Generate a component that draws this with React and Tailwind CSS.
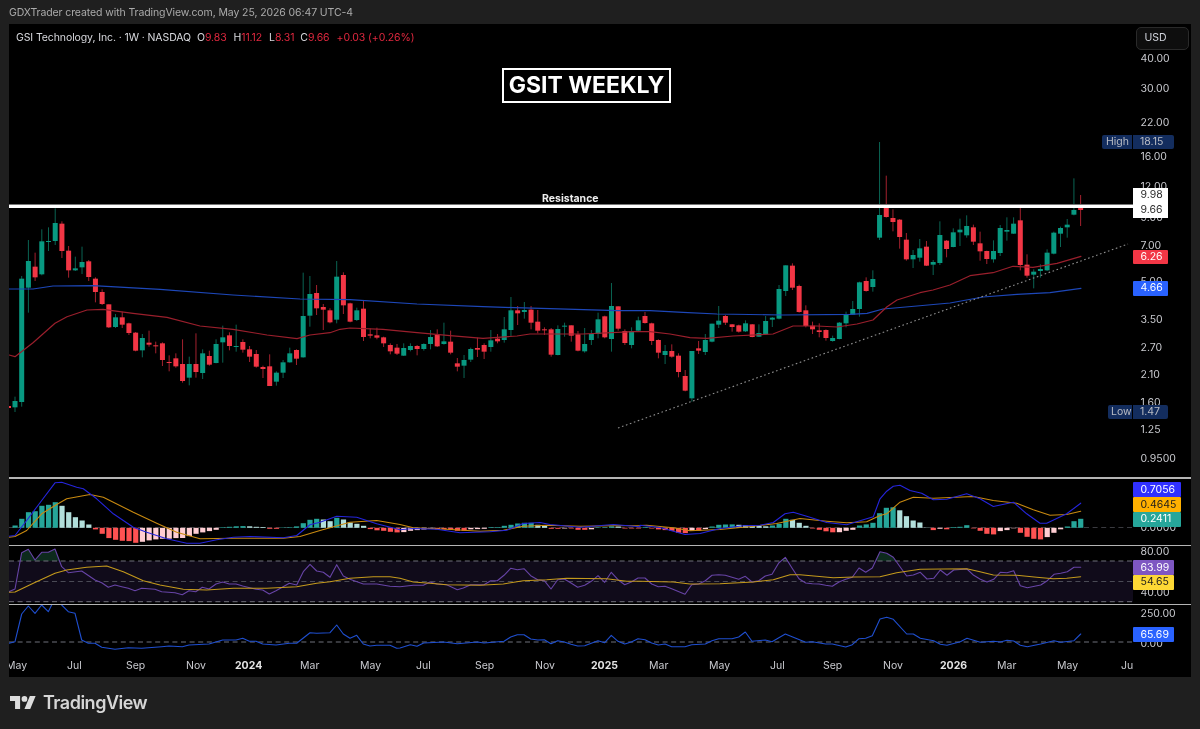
import React from 'react';

const X = (i) => 15 + 6.702 * i;
const Z = (ox, oy, a) => {
  const out = [];
  for (let i = 0; i < a.length; i += 2) out.push([ox + a[i] / 3, oy + a[i + 1] / 3]);
  return out;
};
const P = (pts) => pts.map((p) => p[0].toFixed(1) + ',' + p[1].toFixed(1)).join(' ');

const seg = (ox, oy, s) =>
  s.trim().split(/\s+/).map((r) => {
    const [c, a, b, d, e] = r.split(',');
    return { g: c === 'g', bt: oy + a / 3, bb: oy + b / 3, wt: oy + d / 3, wb: oy + e / 3 };
  });

const candles = [
  ...seg(0, 200, `g,603,622,590,636 g,236,606,228,620 g,183,263,120,338 r,200,232,158,243 g,124,223,88,226 g,123,126,82,153 g,69,123,25,135 r,71,153,64,174 r,152,211,138,233 g,205,211,170,213 g,186,202,140,222 r,184,231,180,243 r,236,276,232,307 r,276,312,268,315 r,313,382,313,384 g,352,381,342,384 r,352,374,335,384 r,370,399,368,405 r,398,452,396,454 g,414,451,402,472 r,428,434,392,440 r,436,439,425,460 r,430,480,427,498 r,486,489,466,514 r,475,499,460,503 r,492,543,418,548 g,492,533,470,556 r,492,516,400,533 g,460,519,448,537 r,468,494,452,497 g,432,489,418,490 g,412,427,377,488 r,406,438,397,451 g,438,441,374,455 r,426,449,418,458 r,448,470,438,486 r,462,500,450,503 r,501,507,497,534 r,499,558,463,558 g,518,545,514,557 g,487,518,480,534 g,460,487,443,488 r,450,476,448,495 g,348,472,218,473 g,282,347,228,380 r,279,325,255,345 r,321,329,312,390 r,331,367,325,370 g,230,359,183,370 r,225,316,217,342`),
  ...seg(350, 260, `r,130,185,128,187 g,151,180,143,183 r,146,231,120,243 r,223,227,205,235 r,226,233,203,238 r,232,250,230,261 r,255,274,250,283 r,263,281,252,285 g,264,287,250,288 g,258,270,250,274 r,258,267,255,286 g,252,267,250,272 g,231,252,210,268 r,225,259,208,261 g,244,252,188,254 r,245,278,212,283 r,310,320,294,334 g,300,317,285,354 g,267,299,263,306 r,264,269,233,291 r,255,275,250,297 g,241,261,210,275 r,236,244,222,250 g,208,240,171,248 g,151,210,111,230 r,151,160,138,195 g,150,156,126,176 r,149,188,138,208 r,185,212,150,220 r,208,211,202,225 r,208,284,204,290 g,207,285,196,286 g,197,200,188,230 r,196,227,196,245 r,223,272,213,274 g,252,274,204,278 g,222,240,210,255 g,178,222,158,235 r,169,232,167,235 g,138,237,69,275 r,139,206,139,212 r,213,249,208,255 g,213,255,202,265 g,181,212,170,215 r,168,189,156,191 r,190,243,188,255`),
  ...seg(650, 200, `r,420,458,418,475 g,453,465,435,492 r,453,470,433,473 r,467,516,460,532 r,528,572,510,574 g,453,595,453,605 r,445,452,423,462 g,420,456,402,465 g,371,425,371,427 g,362,374,318,384 r,348,368,345,375 r,373,381,372,395 r,376,395,374,398 g,370,394,361,396 r,373,411,372,412 g,399,410,373,411 g,363,403,348,405 g,353,359,351,381 g,267,356,255,358 g,196,273,196,288 r,197,263,190,270 r,258,336,254,338 r,331,378,316,382 r,377,388,365,402 r,391,396,370,412 r,390,414,388,422 g,414,423,407,425 g,368,417,366,418 g,344,370,335,382 g,327,344,303,345 g,247,327,245,350 r,243,273,232,275 g,237,261,211,275`),
  ...seg(860, 130, `g,255,323,36,330 r,229,261,137,263 r,264,276,238,304 r,269,321,267,356 r,329,388,309,392 g,375,388,360,414 g,355,383,327,395 r,350,407,333,408 g,396,404,390,435 g,315,399,274,405 r,332,357,330,382 g,307,351,295,352 g,299,307,266,348 g,288,316,256,323 r,292,335,284,345 r,340,364,305,392 r,363,387,362,402 g,363,388,331,398 g,294,369,285,378 g,300,305,262,332 g,281,311,262,312 r,271,405,228,421 r,404,437,373,443 g,425,434,418,475 g,417,423,403,443 g,368,421,358,423 g,308,371,305,373 g,294,311,290,351 g,284,292,267,323 g,240,254,145,256 r,234,240,195,288`),
];

const blueMA = [[9,289],[33,289],[53,286],[93,285.7],[160,289.3],[233,295],[300,299],[350,299.7],[417,304],[483,306.7],[550,308.7],[617,310.7],[650,310.7],[683,312.3],[717,314],[783,315],[850,314.3],[867,313.3],[883,309],[917,306],[950,303],[983,297],[1017,294.3],[1050,292.7],[1081,288.3]];
const redMA = [[9,355],[15,356.7],[33,342.7],[55,323.3],[67,316.7],[87,310],[103,309.3],[133,313.3],[167,317.3],[200,326],[233,329.3],[267,335],[297,338.7],[310,335],[330,332.7],[340,329.3],[350,328],[383,329.3],[417,332.7],[450,335.7],[483,338.3],[517,336],[530,334],[583,334],[633,331.7],[650,331.7],[670,334],[690,337.7],[707,338.3],[733,336],[773,334],[793,326],[817,326],[837,327],[857,324],[873,320],[887,306.7],[897,300],[920,292.7],[933,290],[950,285],[970,275.7],[993,272.7],[1013,266.3],[1033,267.3],[1057,263.3],[1081,256.3]];

const hist = [2.3,9,15.6,16.6,22,23,25.6,22,15.6,10.6,7.3,3.3,-1.6,-6,-10.3,-12,-13,-13.3,-15,-14,-12.6,-11.6,-11,-10.9,-10.3,-10.2,-8.3,-6,-4.6,-3.3,-2,.6,1,1.5,1.7,1.5,1,.8,-1,-1,.4,.6,1.4,4.6,8,9,8.3,6.6,10,8.3,5.3,4,2,-1.3,-2.5,-3,-4,-4.6,-4.3,-3,-2.3,-1.7,-1,-1.5,-1.5,-2,-3,-3,-1.5,-1.3,-1,.7,.7,2,3,4.3,5,5,3,2.5,-1,-1,-.7,-.7,-2,-2,-1.5,.5,.5,1.5,1.3,-.7,-.7,-.7,.7,-.7,-1.6,-2.3,-3,-5,-5.3,-3,-3,-1.3,1.3,3,3.3,3.4,3,2.6,2,1.9,1.5,2.3,4,9,8,5,2,-.7,-2,-3.5,-4.5,-4.4,-3,-2,2.3,3.4,5,14.6,20,20.5,17.5,11.6,7.3,5.3,.3,-2.3,-1,-1.5,.7,1,2.6,-.6,-3,-6,-6.6,-3.3,-2.3,-.5,-5,-9,-11,-11.6,-9.3,-5,-1.5,1.3,6.6,9];

const macd = [
  ...Z(0,470,[27,197,45,195,80,150,125,90,165,37,185,35,230,50,250,55,290,85,340,130,400,170,440,185,500,205,560,218,600,218,650,208,700,200,750,198,850,202,890,195,930,163,960,155,1010,137,1070,140,1130,160,1200,178]),
  ...Z(380,478,[100,150,170,152,240,163,330,160,380,155,430,135,480,132,510,138,600,146,700,138,780,145]),
  ...Z(620,478,[60,140,120,147,195,168,240,165,300,150,370,142,420,140,460,132,495,106,520,101,560,113,620,132,680,139,720,127,760,115]),
  ...Z(850,470,[90,85,110,62,130,47,150,44,180,60,215,68,250,88,290,86,350,70,390,85,430,108,490,95,530,130,570,158,590,158,650,130,692,98]),
];
const signal = [
  ...Z(0,470,[27,200,45,198,80,180,125,130,165,105,200,85,270,72,310,80,400,125,470,158,530,185,600,205,700,203,850,203,900,198,960,180,1050,155,1130,150,1200,162]),
  ...Z(380,478,[100,148,200,152,300,158,370,155,430,143,500,140,600,143,700,142,780,141]),
  ...Z(620,478,[80,140,160,148,210,157,300,153,400,143,470,135,540,120,620,128,680,133,740,130]),
  ...Z(850,470,[90,135,110,130,150,95,190,80,250,83,370,78,430,90,500,98,550,118,600,134,650,132,692,122]),
];
const rsi = [
  ...Z(0,470,[27,365,45,357,65,248,85,238,105,270,125,247,145,247,165,237,185,290,205,308,245,303,285,330,305,338,325,352,345,345,365,350,385,355,405,362,425,355,465,358,485,365,525,368,547,374,567,362,587,365,607,352,627,357,648,342,668,336,688,342,708,342,728,348,768,358,788,360,808,372,828,362,868,340,890,345,910,305,930,283,950,303,970,307,990,322,1010,284,1030,318,1050,328,1090,342,1130,342,1170,349,1200,350]),
  ...Z(380,478,[60,326,100,322,130,322,150,312,170,318,200,320,232,335,250,330,272,320,312,320,332,308,352,308,372,292,392,271,412,275,432,272,452,293,473,305,493,308,513,333,533,305,553,303,573,315,593,328,614,322,634,310,654,293,674,313,694,283,714,305,734,320,754,312,774,300]),
  ...Z(620,478,[75,300,95,318,115,326,135,325,155,332,195,349,215,320,236,318,256,308,276,292,296,290,316,292,336,298,356,304,376,295,396,312,416,308,436,294,456,289,476,255,496,238,516,270,537,302,557,315,577,317,597,318,617,322,637,325,657,312,677,304,697,298,717,270,737,283,757,270]),
  ...Z(850,470,[90,245,110,250,130,262,150,290,170,318,190,315,211,307,231,327,251,325,271,300,291,316,311,300,351,297,371,316,391,328,411,336,431,328,451,307,471,308,491,302,511,347,532,353,572,345,592,332,612,313,632,310,652,305,672,292,692,292]),
];
const rsiMa = [
  ...Z(0,470,[27,367,45,366,100,340,165,310,200,300,260,292,320,288,370,305,430,332,480,345,550,358,620,360,700,355,800,355,890,350,950,340,990,335,1050,325,1120,320,1170,320,1200,325]),
  ...Z(380,478,[100,312,150,316,200,320,300,322,370,318,430,308,500,305,560,301,680,302,740,310,780,310]),
  ...Z(620,478,[160,312,210,318,300,317,400,312,460,305,510,290,540,290,640,299,700,297]),
  ...Z(850,470,[90,320,140,308,210,298,350,296,390,305,430,315,500,316,560,322,610,326,650,325,692,320]),
];
const cci = [
  ...Z(0,470,[27,520,45,515,65,432,85,408,105,430,125,405,145,425,165,385,185,405,205,425,225,430,245,510,265,520,285,520,305,532,345,538,385,533,425,535,485,530,507,528,547,530,567,525,627,522,668,510,708,510,728,505,748,514,768,514,788,522,828,525,868,520,890,520,930,488,950,490,990,488,1010,465,1030,492,1050,505,1070,496,1090,522,1110,528,1130,526,1170,526,1190,535]),
  ...Z(380,478,[60,510,91,500,111,505,131,495,191,492,232,497,292,492,312,495,372,490,392,477,412,470,432,470,452,483,473,486,493,485,513,497,533,488,553,492,573,499,593,504,614,503,634,496,654,488,674,494,694,472,714,490,734,498,754,492,774,482]),
  ...Z(620,478,[75,485,95,495,115,501,135,498,155,506,195,506,215,500,256,498,276,488,296,482,336,482,356,477,376,462,396,490,436,486,456,491,496,468,557,493,577,491,617,498,637,498,677,507,697,500,717,482,737,481,757,473]),
  ...Z(850,470,[90,447,110,442,130,448,170,492,190,492,211,505,251,512,271,523,291,526,331,515,351,505,391,517,431,514,451,516,471,511,491,513,511,526,532,530,572,522,612,512,632,517,672,512,692,492]),
];

const priceTicks = [
  ['40.00','top-[27px]'],['30.00','top-[57px]'],['22.00','top-[91px]'],['16.00','top-[125px]'],['12.00','top-[155px]'],['9.00','top-[186px]'],['7.00','top-[214px]'],['5.00','top-[250px]'],['3.50','top-[288px]'],['2.70','top-[316px]'],['2.10','top-[343px]'],['1.60','top-[371px]'],['1.25','top-[398px]'],['0.9500','top-[427px]'],
];
const timeTicks = [
  ['May','left-[-3px]'],['Jul','left-[58px]'],['Sep','left-[117px]'],['Nov','left-[177px]'],['2024','left-[226px] font-bold text-[#e4e4e4]'],['Mar','left-[291px]'],['May','left-[351px]'],['Jul','left-[407px]'],['Sep','left-[466px]'],['Nov','left-[526px]'],['2025','left-[582px] font-bold text-[#e4e4e4]'],['Mar','left-[640px]'],['May','left-[700px]'],['Jul','left-[761px]'],['Sep','left-[814px]'],['Nov','left-[874px]'],['2026','left-[931px] font-bold text-[#e4e4e4]'],['Mar','left-[988px]'],['May','left-[1048px]'],['Ju','left-[1112px]'],
];

const Tick = ({ children, className }) => (
  <span className={'absolute left-[7.5px] mt-[1px] leading-[14px] text-[10.5px] text-[#c8c9ce] ' + className}>{children}</span>
);
const Tag = ({ children, className }) => (
  <div className={'absolute left-[1124px] pl-[7.5px] flex items-center text-[10.5px] rounded-[1px] ' + className}>{children}</div>
);
const Divider = () => <div className="h-[1.5px] w-full bg-[#b4b4b4]" />;
const Line = ({ pts, stroke, w = 1.1 }) => (
  <polyline points={P(pts)} fill="none" stroke={stroke} strokeWidth={w} strokeLinejoin="round" strokeLinecap="round" />
);
const Dash = ({ y, stroke = '#6f717a' }) => (
  <line x1="9" x2="1133" y1={y} y2={y} stroke={stroke} strokeWidth="1" strokeDasharray="5 3.6" />
);

function PriceSvg() {
  return (
    <svg className="block" width="1124" height="453" viewBox="9 24 1124 453">
      <line x1={X(-1)} x2={X(-1)} y1="405" y2="409" stroke="#a3212e" />
      <rect x="9" y="406" width="2" height="2" fill="#f23645" />
      {candles.map((c, i) => {
        const x = X(i);
        return (
          <g key={i}>
            <line x1={x} x2={x} y1={c.wt} y2={c.wb} stroke={c.g ? '#0a6453' : '#a3212e'} strokeWidth="1" />
            <rect x={x - 2.5} y={c.bt} width="5" height={Math.max(c.bb - c.bt, 1)} fill={c.g ? '#089981' : '#f23645'} />
          </g>
        );
      })}
      <Line pts={blueMA} stroke="#1d47b8" w={1.2} />
      <Line pts={redMA} stroke="#9a1f2c" w={1.2} />
      <line x1="618" y1="428" x2="1128" y2="244" stroke="#8f8f8f" strokeWidth="1.1" strokeDasharray="1.6 2.6" />
      <rect x="9" y="204" width="1124" height="1" fill="#777" />
      <rect x="9" y="205" width="1124" height="3" fill="#ffffff" />
    </svg>
  );
}

function MacdSvg() {
  return (
    <svg className="block" width="1124" height="66" viewBox="9 478.5 1124 66">
      <Dash y={527} stroke="#3a3b40" />
      {hist.map((v, i) => {
        const prev = i ? hist[i - 1] : 0;
        const fill = v >= 0 ? (v >= prev ? '#26a69a' : '#b2dfdb') : v <= prev ? '#ff5252' : '#ffcdd2';
        return <rect key={i} x={X(i) - 2.5} y={v >= 0 ? 527.3 - v : 527.3} width="5.2" height={Math.abs(v)} fill={fill} />;
      })}
      <Line pts={signal} stroke="#c98a10" />
      <Line pts={macd} stroke="#2525dc" />
    </svg>
  );
}

function RsiSvg() {
  const fillPts = [...rsi, [1081, 561], [9, 561]];
  return (
    <svg className="block" width="1124" height="57.5" viewBox="9 546 1124 57.5">
      <defs>
        <clipPath id="rsiTop"><rect x="9" y="546" width="1124" height="15" /></clipPath>
      </defs>
      <rect x="9" y="561" width="1124" height="41" fill="#100b1a" />
      <polygon points={P(fillPts)} fill="#0d2a1d" clipPath="url(#rsiTop)" />
      <Dash y={561} />
      <Dash y={581.5} stroke="#4a4a55" />
      <Dash y={601.7} />
      <Line pts={rsi} stroke="#6744a6" />
      <Line pts={rsiMa} stroke="#c49a1c" />
    </svg>
  );
}

function CciSvg() {
  return (
    <svg className="block" width="1124" height="50" viewBox="9 605 1124 50">
      <Dash y={642} />
      <Line pts={cci} stroke="#1f4fd0" />
    </svg>
  );
}

export default function App() {
  return (
    <div className="w-[1200px] h-[729px] overflow-hidden bg-[#1f1f1f] flex flex-col blur-[0.35px] font-['Inter','Liberation_Sans',sans-serif]">
      <div className="h-6 shrink-0 pl-[9px] pt-[2px] flex items-center text-[10.5px] tracking-[-0.1px] text-[#ababab]">
        GDXTrader created with TradingView.com, May 25, 2026 06:47 UTC-4
      </div>

      <div className="w-[1182px] ml-[9px] shrink-0 bg-black flex flex-col">
        {/* price pane */}
        <div className="relative h-[453px] flex overflow-hidden">
          <PriceSvg />
          <div className="relative flex-1">
            {priceTicks.map(([t, c]) => (
              <Tick key={t} className={c}>{t}</Tick>
            ))}
            <div className="absolute left-[2.5px] top-[2.5px] w-[53px] h-[23px] rounded-[5px] border border-[#2a2a2a] bg-[#0e0e0e] flex items-center pl-[8px] text-[10.5px] text-[#d1d4dc]">USD</div>
          </div>

          <div className="absolute left-[7px] top-[7px] flex items-center h-[14px] text-[10.5px] tracking-[-0.1px] text-[#d8d9de] whitespace-nowrap">
            <span>GSI Technology, Inc. · 1W · NASDAQ</span>
            <span className="ml-[6px]">O<span className="text-[#e0283f]">9.83</span></span>
            <span className="ml-[7px]">H<span className="text-[#e0283f]">11.12</span></span>
            <span className="ml-[7px]">L<span className="text-[#e0283f]">8.31</span></span>
            <span className="ml-[6px]">C<span className="text-[#e0283f]">9.66</span></span>
            <span className="ml-[7px] text-[#e0283f]">+0.03 (+0.26%)</span>
          </div>

          <div className="absolute left-[493px] top-[44px] w-[169px] h-[35px] border-2 border-white bg-black flex items-center justify-center text-[23px] font-bold text-white">
            GSIT WEEKLY
          </div>
          <div className="absolute left-[533px] top-[168px] text-[10.5px] leading-[14px] font-bold text-[#ededed]">Resistance</div>

          <div className="absolute left-[1093px] top-[111px] h-[14px] flex text-[10.5px] leading-[14px] text-[#b9bcc4]">
            <span className="w-[30px] pl-[4px] bg-[#132d5e] rounded-l-[2px]">High</span>
            <span className="ml-[1px] w-[41px] pl-[7px] bg-[#132d5e] rounded-r-[2px]">18.15</span>
          </div>
          <div className="absolute left-[1099px] top-[381px] h-[14px] flex text-[10.5px] leading-[14px] text-[#b9bcc4]">
            <span className="w-[24px] pl-[3px] bg-[#132d5e] rounded-l-[2px]">Low</span>
            <span className="ml-[1px] w-[35px] pl-[7px] bg-[#132d5e] rounded-r-[2px]">1.47</span>
          </div>

          <div className="absolute left-[1124px] top-[163.5px] w-[35px] h-[30px] bg-white pl-[7.5px] flex flex-col justify-between py-[0.5px] text-[10.5px] leading-[14px] text-[#2a2a2a]">
            <span>9.98</span>
            <span>9.66</span>
          </div>
          <Tag className="top-[225.5px] w-[35px] h-[14.5px] bg-[#f23645] text-white">6.26</Tag>
          <Tag className="top-[257px] w-[35px] h-[14.5px] bg-[#2962ff] text-white">4.66</Tag>
        </div>
        <Divider />

        {/* MACD */}
        <div className="relative h-[66px] flex">
          <MacdSvg />
          <div className="relative flex-1">
            <Tick className="top-[41px]">0.0000</Tick>
          </div>
          <Tag className="top-[3.5px] w-[48px] h-[15px] bg-[#3030ff] text-white">0.7056</Tag>
          <Tag className="top-[18.5px] w-[48px] h-[15px] bg-[#ffb000] text-[#1c1c1c]">0.4645</Tag>
          <Tag className="top-[33px] w-[48px] h-[15px] bg-[#26a69a] text-white">0.2411</Tag>
        </div>
        <Divider />

        {/* RSI */}
        <div className="relative h-[57.5px] flex">
          <RsiSvg />
          <div className="relative flex-1">
            <Tick className="top-[-2px]">80.00</Tick>
            <Tick className="top-[39px]">40.00</Tick>
          </div>
          <Tag className="top-[14px] w-[41px] h-[15px] bg-[#7e57c2] text-white">63.99</Tag>
          <Tag className="top-[29px] w-[41px] h-[14.5px] bg-[#fdd835] text-[#1c1c1c]">54.65</Tag>
        </div>
        <Divider />

        {/* third indicator */}
        <div className="relative h-[50px] flex">
          <CciSvg />
          <div className="relative flex-1">
            <Tick className="top-[1px]">250.00</Tick>
            <Tick className="top-[31px]">0.00</Tick>
          </div>
          <Tag className="top-[22px] w-[41px] h-[15px] bg-[#2962ff] text-white">65.69</Tag>
        </div>

        {/* time axis */}
        <div className="relative h-[21.5px] overflow-hidden">
          {timeTicks.map(([t, c], i) => (
            <span key={i} className={'absolute top-[4px] leading-[14px] text-[10.5px] text-[#c8c9ce] ' + c}>{t}</span>
          ))}
        </div>
      </div>

      <div className="flex-1 flex items-center pl-[10px] gap-[7px]">
        <svg width="26" height="13" viewBox="0 4 36 18" fill="#dcdcdc" aria-hidden="true">
          <path d="M14 22H7V11H0V4h14v18zM28 22h-8l7.5-18h8L28 22z" />
          <circle cx="20" cy="8" r="4" />
        </svg>
        <span className="text-[18px] font-semibold leading-none tracking-[-0.5px] text-[#d6d6d6]">TradingView</span>
      </div>
    </div>
  );
}
